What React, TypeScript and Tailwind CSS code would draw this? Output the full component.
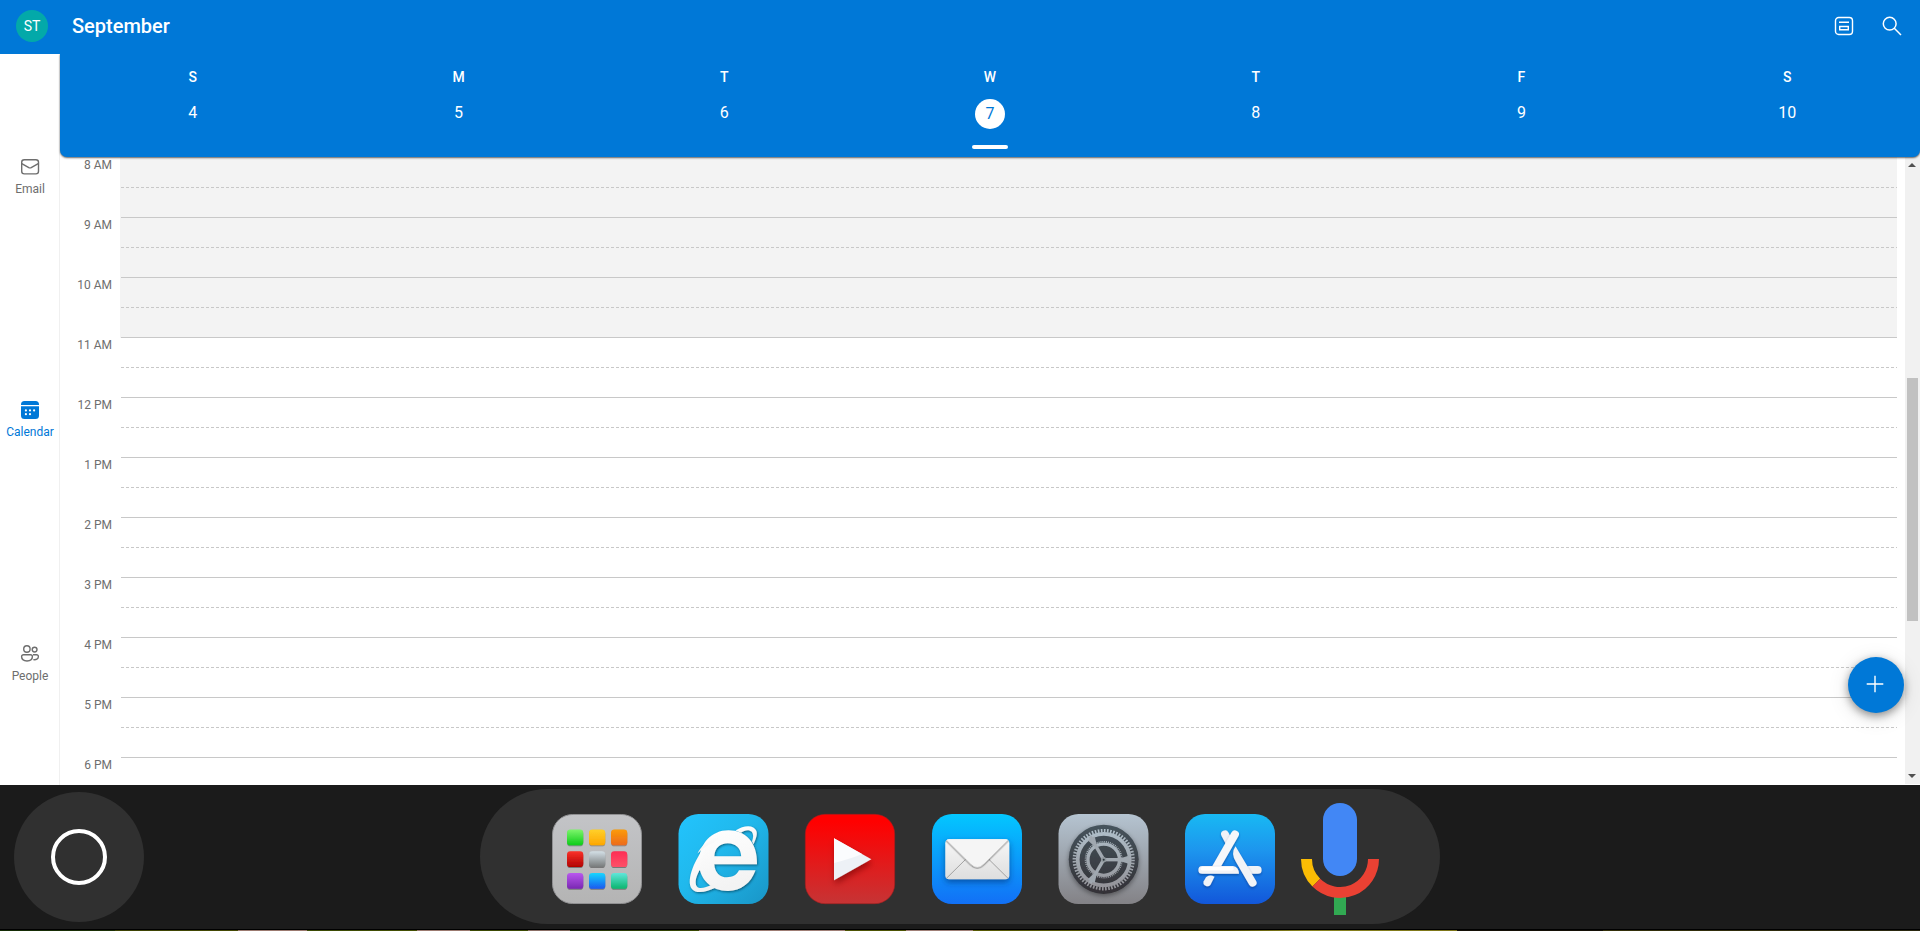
import React from "react";

const days = [
  { name: "S", date: 4 },
  { name: "M", date: 5 },
  { name: "T", date: 6 },
  { name: "W", date: 7, today: true },
  { name: "T", date: 8 },
  { name: "F", date: 9 },
  { name: "S", date: 10 },
];

const hours = [
  "8 AM", "9 AM", "10 AM", "11 AM", "12 PM", "1 PM", "2 PM", "3 PM", "4 PM", "5 PM", "6 PM",
];

function MailIcon() {
  return (
    <svg width="20" height="20" viewBox="0 0 20 20" fill="none" stroke="currentColor" strokeWidth="1.4">
      <rect x="1.7" y="2.7" width="16.8" height="14.2" rx="2.6" />
      <path d="M1.8 6.6L8.8 10.6Q10 11.2 11.2 10.6L18.2 6.6" strokeLinejoin="round" />
    </svg>
  );
}

function CalendarIcon() {
  return (
    <svg width="20" height="20" viewBox="0 0 20 20" fill="currentColor">
      <path d="M1 5V4.500a3.500 3.500 0 0 1 3.500-3.500h11a3.500 3.500 0 0 1 3.500 3.500V5z" />
      <path d="M1 6.200h18V15.500a3.500 3.500 0 0 1-3.500 3.500h-11a3.500 3.500 0 0 1-3.500-3.500z" />
      <g fill="#fff">
        <circle cx="10" cy="10.400" r="1.100" />
        <circle cx="14.100" cy="10.400" r="1.100" />
        <circle cx="5.900" cy="10.400" r="1.100" />
        <circle cx="5.900" cy="14.200" r="1.100" />
        <circle cx="10" cy="14.200" r="1.100" />
      </g>
    </svg>
  );
}

function PeopleIcon() {
  return (
    <svg width="20" height="20" viewBox="0 0 20 20" fill="none" stroke="currentColor" strokeWidth="1.4">
      <circle cx="6.900" cy="5" r="3.200" />
      <circle cx="14.600" cy="5.600" r="2.400" />
      <path d="M3.500 10.700h7a1.900 1.900 0 0 1 1.900 1.900c0 2.900-2.300 4.400-5.400 4.400s-5.400-1.500-5.400-4.400a1.900 1.900 0 0 1 1.900-1.900z" />
      <path d="M13 10.700h3.600a1.800 1.800 0 0 1 1.800 1.800c0 2.500-2.300 3.600-5.100 3.100" />
    </svg>
  );
}

function NavItem({ label, active, children }: { label: string; active?: boolean; children: React.ReactNode }) {
  return (
    <div className={`flex flex-1 flex-col items-center justify-center ${active ? "text-[#0078d7]" : "text-[#6e6e6e]"}`}>
      {children}
      <span className="mt-[5px] text-[12px] leading-[14px]">{label}</span>
    </div>
  );
}

function Tile({ children }: { children: React.ReactNode }) {
  return (
    <svg width="90" height="90" viewBox="0 0 90 91" preserveAspectRatio="none" className="shrink-0 overflow-visible">
      {children}
    </svg>
  );
}

const launcherColors = [
  ["#7df56c", "#0ccb17"],
  ["#ffd02a", "#fda600"],
  ["#fb9b08", "#ec6a1c"],
  ["#fb3128", "#b00202"],
  ["#d3dfe6", "#777a7a"],
  ["#fd2d55", "#fd5068"],
  ["#b957ee", "#7927b2"],
  ["#14d6ff", "#1b58ef"],
  ["#5fe6da", "#0cb56e"],
];

function LauncherIcon() {
  return (
    <Tile>
      <defs>
        <linearGradient id="la" x2="0" y2="1">
          <stop stopColor="#c3c4c7" />
          <stop offset="1" stopColor="#b4b4b4" />
        </linearGradient>
        {launcherColors.map(([a, b], i) => (
          <linearGradient key={i} id={`l${i}`} x2="0" y2="1">
            <stop stopColor={a} />
            <stop offset="1" stopColor={b} />
          </linearGradient>
        ))}
        <filter id="ls" x="-20%" y="-20%" width="140%" height="150%">
          <feDropShadow dx="0" dy="0.8" stdDeviation="0.5" floodOpacity="0.45" />
        </filter>
      </defs>
      <rect x="0.5" y="0.5" width="89" height="90" rx="20" fill="url(#la)" stroke="#909092" />
      <g filter="url(#ls)">
        {launcherColors.map((_, i) => (
          <rect key={i} x={15 + (i % 3) * 22} y={15.7 + Math.floor(i / 3) * 22} width="16.3" height="16" rx="3.5" fill={`url(#l${i})`} />
        ))}
      </g>
    </Tile>
  );
}

function ExplorerIcon() {
  return (
    <Tile>
      <defs>
        <linearGradient id="ie" x2="1" y2="1">
          <stop stopColor="#22c4fd" />
          <stop offset="0.45" stopColor="#20b8ec" />
          <stop offset="1" stopColor="#1995c6" />
        </linearGradient>
        <linearGradient id="iw" x2="0.3" y2="1">
          <stop stopColor="#fff" />
          <stop offset="1" stopColor="#f3f3f3" />
        </linearGradient>
        <filter id="is" x="-20%" y="-20%" width="150%" height="150%">
          <feDropShadow dx="0.8" dy="1.2" stdDeviation="1" floodColor="#06364c" floodOpacity="0.65" />
        </filter>
      </defs>
      <g transform="translate(0.5 0)">
        <rect width="90" height="91" rx="20" fill="url(#ie)" />
        <g filter="url(#is)" fill="url(#iw)">
          <path d="M78.500 50.700H35.800C36.200 59 41.500 64 48.500 64C54 64 58.500 61.500 60.500 57H77C72.500 70 62.500 77.800 49.500 77.800C33 77.800 20.500 66 20.500 49C20.500 30 33 16.500 50 16.500C67 16.500 79 28.500 78.500 50.700ZM35.800 42.700H62.700C62.500 34.500 57 29.500 49.300 29.500C41.500 29.500 36.200 34.500 35.800 42.700Z" fillRule="evenodd" />
          <path d="M57 16.800C66 10.900 75.500 11 77.900 17.300C79 20.500 77.600 25.500 75 30.500L73.600 27.500C75 23.800 75.100 20.300 73.300 18C71 15.500 66 15.800 62.500 19Z" />
          <path d="M27 32C14 49 7.500 69 13.700 76C18 80.800 28 79 37.500 74.300L33.500 71.300C27 74.800 20.800 76.300 18.400 73.300C16 69.800 17.200 62.500 22 55.500Z" />
          <path d="M42 23C30.500 25.500 22.500 32 19 40C24 34.500 29.500 31 35 29Z" />
        </g>
      </g>
    </Tile>
  );
}

function VideoIcon() {
  return (
    <Tile>
      <defs>
        <linearGradient id="yt" x2="0" y2="1">
          <stop offset="0.08" stopColor="#ff0000" />
          <stop offset="1" stopColor="#c63435" />
        </linearGradient>
        <filter id="ys" x="-30%" y="-30%" width="170%" height="170%">
          <feDropShadow dx="1" dy="4" stdDeviation="3" floodColor="#600" floodOpacity="0.55" />
        </filter>
      </defs>
      <rect x="0.3" y="0.3" width="89.4" height="90.4" rx="20" fill="url(#yt)" stroke="#a51c1d" strokeWidth="0.6" />
      <path d="M29 24.500L66.300 45.700L29 66.900Z" fill="#edf1f6" filter="url(#ys)" />
      <path d="M29 24.500L57 40.400Q48 44.500 29 49.500Z" fill="#fbfcfe" />
    </Tile>
  );
}

function EnvelopeIcon() {
  return (
    <Tile>
      <defs>
        <linearGradient id="ma" x2="0" y2="1">
          <stop stopColor="#03c7ff" />
          <stop offset="1" stopColor="#1270f6" />
        </linearGradient>
        <linearGradient id="mb" x2="0" y2="1">
          <stop stopColor="#f7f7f7" />
          <stop offset="1" stopColor="#dedede" />
        </linearGradient>
        <filter id="ms" x="-20%" y="-20%" width="140%" height="170%">
          <feDropShadow dx="0" dy="3" stdDeviation="3" floodColor="#032a70" floodOpacity="0.6" />
        </filter>
        <filter id="mf" x="-20%" y="-20%" width="140%" height="150%">
          <feDropShadow dx="0" dy="0.8" stdDeviation="0.8" floodOpacity="0.55" />
        </filter>
        <clipPath id="mc">
          <rect x="13.3" y="25.5" width="64" height="40.5" rx="4" />
        </clipPath>
      </defs>
      <rect width="90" height="91" rx="20" fill="url(#ma)" />
      <rect x="13.3" y="25.5" width="64" height="40.5" rx="4" fill="url(#mb)" filter="url(#ms)" />
      <g clipPath="url(#mc)">
        <path d="M14 65.500L35 44.500M76.500 65.500L55.500 44.500" stroke="#999" strokeWidth="0.9" />
        <path d="M12 24H78.500L52 50.500Q45.300 57.500 38.500 50.500Z" fill="#f5f5f5" stroke="#bbb" strokeWidth="0.5" filter="url(#mf)" />
      </g>
    </Tile>
  );
}

function SettingsIcon() {
  const spokes = [0, 120, 240];
  return (
    <Tile>
      <defs>
        <linearGradient id="se" x2="0" y2="1">
          <stop stopColor="#b5c4d1" />
          <stop offset="1" stopColor="#838286" />
        </linearGradient>
        <linearGradient id="sd" x2="0" y2="1">
          <stop stopColor="#46545d" />
          <stop offset="1" stopColor="#333136" />
        </linearGradient>
        <linearGradient id="sg" gradientUnits="userSpaceOnUse" x1="0" y1="-32" x2="0" y2="32">
          <stop stopColor="#b0c0cb" />
          <stop offset="1" stopColor="#929196" />
        </linearGradient>
        <filter id="ss" x="-20%" y="-20%" width="140%" height="150%">
          <feDropShadow dx="0" dy="2" stdDeviation="2.5" floodOpacity="0.4" />
        </filter>
      </defs>
      <g transform="translate(0.5 0)">
        <rect width="90" height="91" rx="20" fill="url(#se)" />
        <circle cx="45.2" cy="45.8" r="35" fill="url(#sd)" filter="url(#ss)" />
        <g transform="translate(45.2 46.2)" fill="none" stroke="url(#sg)">
          <circle r="29.3" strokeWidth="3.6" strokeDasharray="1.63 1.438" />
          <circle r="26" strokeWidth="3.8" />
          <circle r="18.2" strokeWidth="1.6" strokeDasharray="0.9 1.006" />
          <circle r="15.8" strokeWidth="3.4" />
          {spokes.map((a) => (
            <g key={a} transform={`rotate(${a})`}>
              <path d="M1.500 -0.500H26V0.500H1.500Z" strokeWidth="2.4" />
              <path d="M15 -1L25 -4V4L15 1Z" fill="#a0a8b0" stroke="none" />
            </g>
          ))}
          <circle r="2.6" fill="#8f979d" stroke="none" />
          <circle r="1" fill="#28323a" stroke="none" />
        </g>
      </g>
    </Tile>
  );
}

function StoreIcon() {
  return (
    <Tile>
      <defs>
        <linearGradient id="st" x2="0" y2="1">
          <stop stopColor="#18b9f3" />
          <stop offset="0.4" stopColor="#1d96ee" />
          <stop offset="1" stopColor="#1257da" />
        </linearGradient>
        <filter id="sh" filterUnits="userSpaceOnUse" x="0" y="0" width="90" height="91">
          <feDropShadow dx="0" dy="1.5" stdDeviation="1.3" floodColor="#042d80" floodOpacity="0.55" />
        </filter>
      </defs>
      <rect width="90" height="91" rx="20" fill="url(#st)" />
      <g fill="none" stroke="#eff2f7" strokeWidth="7.8" strokeLinecap="round">
        <path d="M40 20.500L44 28" filter="url(#sh)" />
        <path d="M64 56.500H72.700" filter="url(#sh)" />
        <path d="M50 20.500L31 54" stroke="#f5f7fa" filter="url(#sh)" />
      </g>
      <g fill="#f1f3f7" filter="url(#sh)">
        <path d="M17.300 52.600H48Q53.500 53.200 54 60.400H17.300A3.900 3.900 0 0 1 17.300 52.600Z" />
        <path d="M50.500 32.500L71 67.500A3.900 3.900 0 0 1 64.200 71.500L51 48.500Q45.500 39.500 50.500 32.500Z" />
        <path d="M21 64Q24.500 60.500 29.500 63.500L25.500 71.500A3.900 3.900 0 0 1 18.700 67.900Z" />
      </g>
      <path d="M17.300 55.300H47" stroke="#fff" strokeWidth="3.5" strokeLinecap="round" />
    </Tile>
  );
}

function MicIcon() {
  return (
    <svg width="78" height="112" viewBox="0 0 78 112" className="shrink-0">
      <rect x="22" y="0" width="34" height="73" rx="17" fill="#4287f5" />
      <path d="M33 94H45V112H33Z" fill="#31a952" />
      <path d="M5.500 56A33.500 33.500 0 0 0 15.300 79.700" fill="none" stroke="#fbbc04" strokeWidth="11" />
      <path d="M15.300 79.700A33.500 33.500 0 0 0 72.500 56" fill="none" stroke="#ea4133" strokeWidth="11" />
    </svg>
  );
}

export default function App() {
  return (
    <div className="flex h-[931px] w-full flex-col overflow-hidden bg-white font-['Roboto',sans-serif]">
      <header className="z-20 flex h-[54px] shrink-0 items-center bg-[#0078d7] pr-[18px] pl-4 text-white">
        <div className="mb-[2px] flex size-8 items-center justify-center rounded-full bg-[#03a9a9] text-[14px]">ST</div>
        <h1 className="mb-[2px] ml-6 text-[20px] leading-6 font-medium">September</h1>
        <div className="mb-[2px] ml-auto flex gap-[28px]">
          <svg width="20" height="20" viewBox="0 0 20 20" fill="none" stroke="currentColor" strokeWidth="1.4">
            <rect x="1.5" y="1.5" width="17" height="17" rx="3.2" />
            <path d="M5 6.300H15M5.700 10.500H14.300V13.700H5.700Z" />
          </svg>
          <svg width="20" height="20" viewBox="0 0 20 20" fill="none" stroke="currentColor" strokeWidth="1.5">
            <circle cx="7.7" cy="7.7" r="6.4" />
            <path d="M12.300 12.300L19 19" />
          </svg>
        </div>
      </header>

      <div className="flex h-[731px] shrink-0">
        <nav className="flex w-[60px] shrink-0 flex-col border-r border-[#f0f0f0] pt-px pl-px">
          <NavItem label="Email"><MailIcon /></NavItem>
          <NavItem label="Calendar" active><CalendarIcon /></NavItem>
          <NavItem label="People"><PeopleIcon /></NavItem>
        </nav>

        <main className="flex min-w-0 flex-1 flex-col">
          <div className="z-10 flex h-[103px] shrink-0 rounded-b-[7px] bg-[#0078d7] text-white shadow-[0_1px_2px_rgba(0,0,0,0.6)]">
            {days.map((d, i) => (
              <div key={i} className="flex flex-1 flex-col items-center pt-[15px]">
                <span className="text-[14px] leading-4 font-medium">{d.name}</span>
                {d.today ? (
                  <>
                    <span className="mt-[14px] flex size-[30px] items-center justify-center rounded-full bg-white pb-px text-[16px] text-[#0078d7]">{d.date}</span>
                    <span className="mt-4 h-1 w-9 rounded-full bg-white" />
                  </>
                ) : (
                  <span className="mt-[14px] text-[16px] leading-7">{d.date}</span>
                )}
              </div>
            ))}
          </div>

          <div className="relative -mt-2 flex h-[636px] overflow-hidden">
            <div className="flex w-[60px] shrink-0 flex-col pt-[8px] pr-2 text-right text-[12px] leading-[14px] text-[#6e6e6e]">
              {hours.map((h) => (
                <span key={h} className="h-[60px] shrink-0 pt-px">{h}</span>
              ))}
            </div>
            <div className="flex w-[1777px] shrink-0 flex-col">
              {hours.map((h, i) => (
                <div key={h} className={`shrink-0 pl-px ${i === 0 ? "h-[69px]" : "h-[60px]"} ${i < 3 ? "bg-[#f3f3f3]" : "bg-white"}`}>
                  <div className={`flex flex-col justify-end border-b border-[#c8c8c8] ${i === 0 ? "h-[69px]" : "h-[60px]"}`}>
                    <svg width="1776" height="1" className="mb-[29px] block">
                      <path d="M0 0.500H1776" stroke="#c8c8c8" strokeDasharray="3 2" />
                    </svg>
                  </div>
                </div>
              ))}
            </div>
            <div className="ml-auto flex h-[635px] w-[15px] shrink-0 flex-col items-center bg-[#f1f1f1] pt-[14px] pb-[6px]">
              <svg width="8" height="4" viewBox="0 0 8 4" className="mr-px shrink-0"><path d="M0 4L4 0L8 4Z" fill="#505050" /></svg>
              <div className="mt-[211px] h-[243px] w-[11px] shrink-0 bg-[#c1c1c1]" />
              <svg width="8" height="4" viewBox="0 0 8 4" className="mt-auto mr-px shrink-0"><path d="M0 0L4 4L8 0Z" fill="#505050" /></svg>
            </div>
            <button className="absolute right-[16px] bottom-[72px] flex size-14 items-center justify-center rounded-full bg-[#0078d7] shadow-[0_3px_8px_rgba(0,0,0,0.4),0_4px_22px_rgba(0,0,0,0.12)]" aria-label="New event">
              <svg width="18" height="18" viewBox="0 0 18 18" className="mr-[2px] mb-[2px]"><path d="M9 0.700V17.300M0.700 9H17.300" stroke="#fff" strokeWidth="1.4" /></svg>
            </button>
          </div>
        </main>
      </div>

      <footer className="flex h-[144px] shrink-0 items-start bg-[#1b1b1b] pl-[14px]">
        <div className="mt-[7px] flex size-[130px] shrink-0 items-center justify-center rounded-full bg-[#303030]">
          <div className="size-14 rounded-full border-4 border-white" />
        </div>
        <div className="mt-1 ml-[336px] flex h-[135px] w-[960px] shrink-0 items-start rounded-[68px] bg-[#303030] pl-[71.8px]">
          <div className="mt-[25px] flex shrink-0 gap-[36.6px]">
            <LauncherIcon />
            <ExplorerIcon />
            <VideoIcon />
            <EnvelopeIcon />
            <SettingsIcon />
            <StoreIcon />
          </div>
          <div className="mt-[14px] ml-[26.2px] shrink-0"><MicIcon /></div>
        </div>
      </footer>
      <div className="h-px shrink-0 bg-black" />
      <div className="h-px shrink-0 bg-[linear-gradient(90deg,#142c06_0%,#1c3006_6%,#3c4204_6%,#454a04_12.400%,#9b7a70_12.400%,#9b7a70_16%,#3a4a04_16%,#455005_21.700%,#9b7a70_21.700%,#9b7a70_24.500%,#3c4a04_24.500%,#3c4a04_27.500%,#8b6f66_27.500%,#8b6f66_29.700%,#1d3006_29.700%,#3a4a04_36.400%,#9b7a70_36.400%,#a08078_44%,#4d5405_44%,#4d5405_47.200%,#a08078_47.200%,#a08078_50.700%,#585a05_50.700%,#565004_64%,#8a8420_68%,#7c7418_75.900%,#141006_75.900%,#141006_83.500%,#34300a_83.500%,#2a2810_100%)]" />
    </div>
  );
}
